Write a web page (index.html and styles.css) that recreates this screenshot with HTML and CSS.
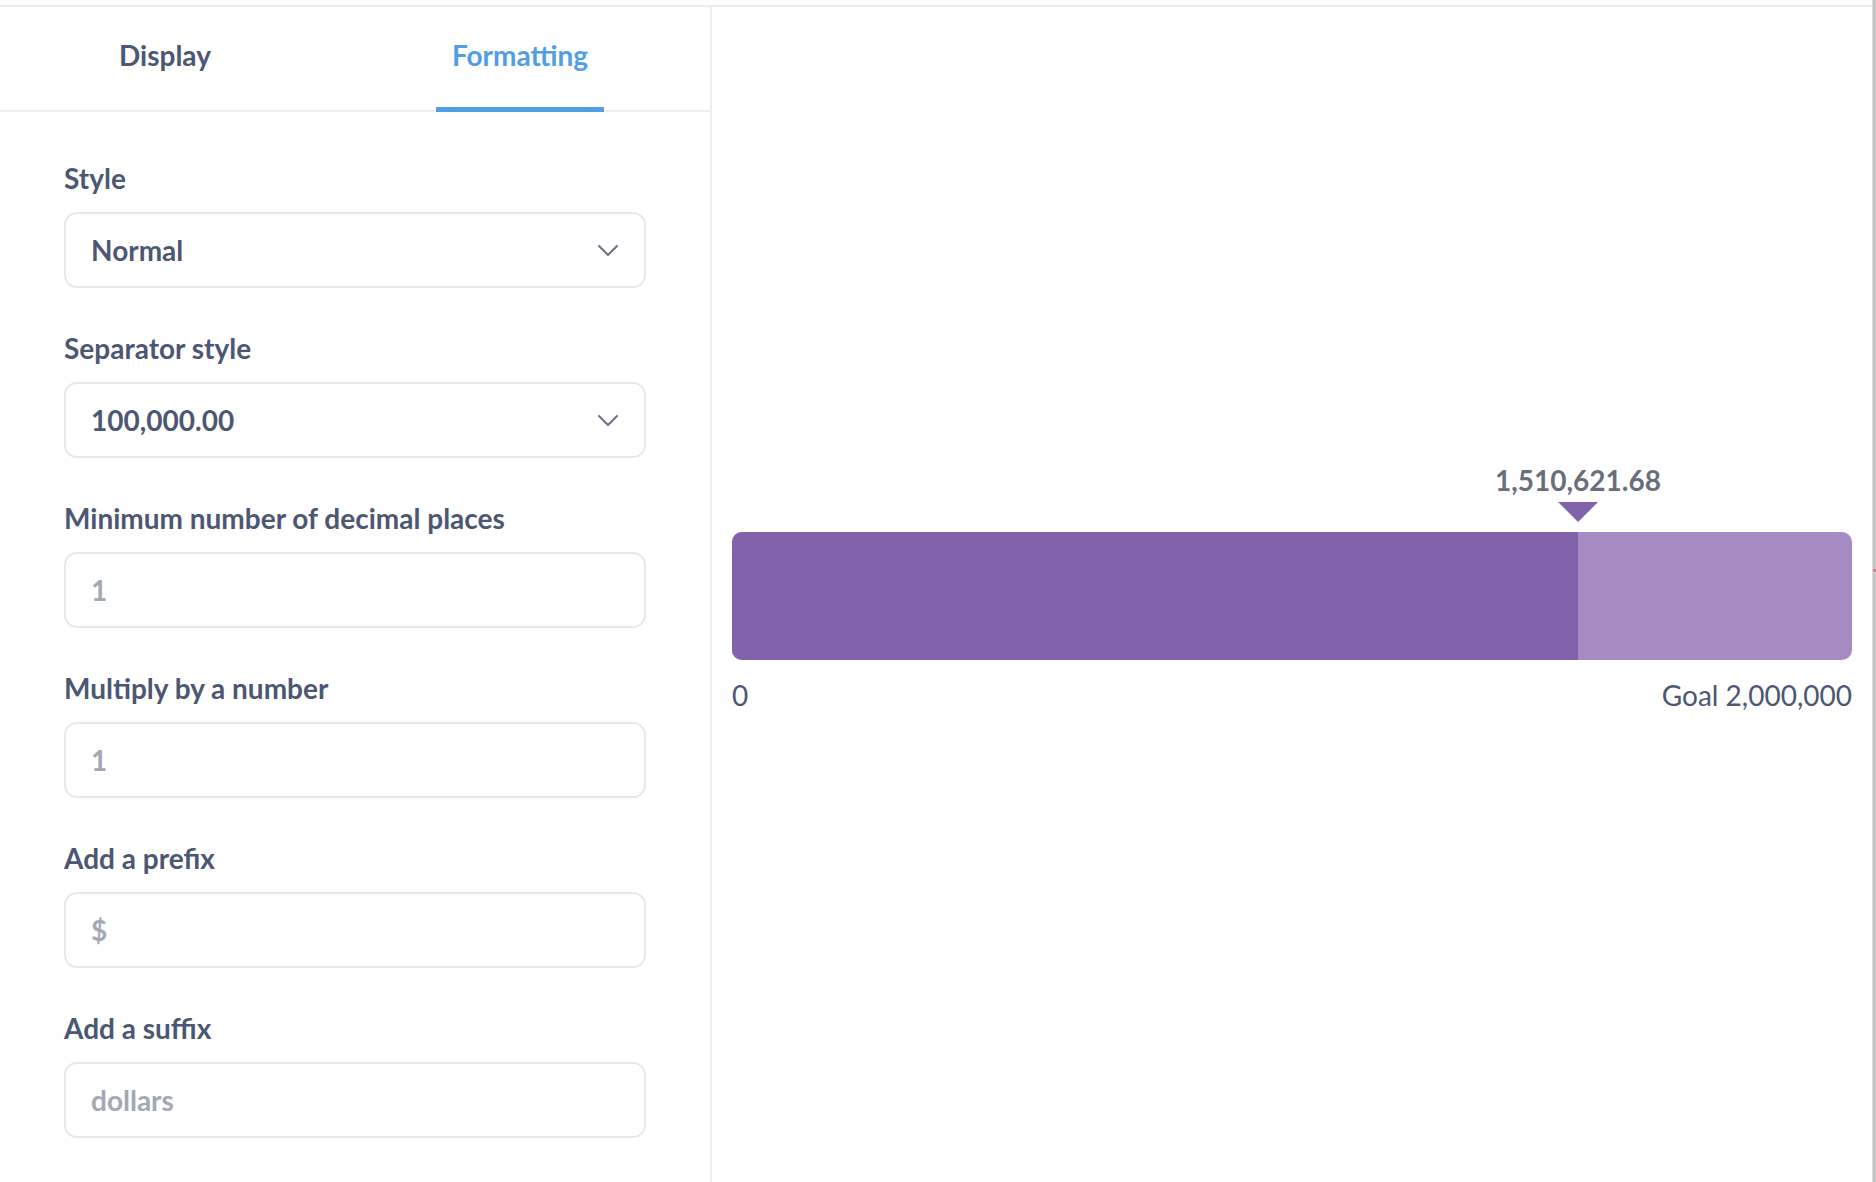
FILE: index.html
```html
<!DOCTYPE html>
<html lang="en">
<head>
<meta charset="utf-8">
<title>Formatting</title>
<link rel="stylesheet" href="styles.css">
</head>
<body>
<div class="app">
  <div class="main">
    <aside class="sidebar">
      <nav class="tabs">
        <div class="tab"><span class="tab-label">Display</span></div>
        <div class="tab tab-active"><span class="tab-label">Formatting</span></div>
      </nav>
      <form class="settings">
        <div class="field">
          <label class="field-label">Style</label>
          <div class="select"><span class="select-value">Normal</span>
            <svg class="chevron" viewBox="0 0 20 11" width="20" height="11"><path d="M1 1 L10 10 L19 1" fill="none" stroke="#6a7285" stroke-width="2" stroke-linecap="round" stroke-linejoin="round"/></svg>
          </div>
        </div>
        <div class="field">
          <label class="field-label">Separator style</label>
          <div class="select"><span class="select-value">100,000.00</span>
            <svg class="chevron" viewBox="0 0 20 11" width="20" height="11"><path d="M1 1 L10 10 L19 1" fill="none" stroke="#6a7285" stroke-width="2" stroke-linecap="round" stroke-linejoin="round"/></svg>
          </div>
        </div>
        <div class="field">
          <label class="field-label">Minimum number of decimal places</label>
          <input class="text-input" type="text" placeholder="1">
        </div>
        <div class="field">
          <label class="field-label">Multiply by a number</label>
          <input class="text-input" type="text" placeholder="1">
        </div>
        <div class="field">
          <label class="field-label">Add a prefix</label>
          <input class="text-input" type="text" placeholder="$">
        </div>
        <div class="field">
          <label class="field-label">Add a suffix</label>
          <input class="text-input" type="text" placeholder="dollars">
        </div>
      </form>
    </aside>
    <section class="viz">
      <div class="progress">
        <div class="marker-row">
          <div class="marker" style="left: 75.53%;">
            <span class="marker-value">1,510,621.68</span>
            <span class="marker-arrow"></span>
          </div>
        </div>
        <div class="bar">
          <div class="bar-fill" style="width: 75.53%;"></div>
        </div>
        <div class="axis">
          <span>0</span>
          <span>Goal 2,000,000</span>
        </div>
      </div>
    </section>
  </div>
  <div class="scroll-strip"><span class="scroll-tick"></span></div>
</div>
</body>
</html>
```

FILE: styles.css
```css
* { box-sizing: border-box; }

html, body {
  margin: 0;
  padding: 0;
  height: 100%;
  background: #ffffff;
}

body {
  font-family: Lato, "Open Sans", sans-serif;
  color: #4c5773;
}

.app {
  display: flex;
  height: 1182px;
  overflow: hidden;
}

.main {
  flex: 1;
  display: flex;
  margin-top: 5px;
  border-top: 2px solid #ececec;
}

.scroll-strip {
  position: relative;
  width: 4px;
  background: #c6c6c6;
  border-left: 1px solid #dadada;
}

.scroll-tick {
  position: absolute;
  left: 0;
  top: 569px;
  width: 4px;
  height: 3px;
  background: #c98a95;
}

/* Sidebar */
.sidebar {
  width: 712px;
  flex-shrink: 0;
  border-right: 2px solid #eeeeee;
  display: flex;
  flex-direction: column;
}

.tabs {
  display: grid;
  grid-template-columns: 330px 380px;
  height: 105px;
  border-bottom: 2px solid #eeeeee;
}

.tab {
  display: flex;
  justify-content: center;
  align-items: stretch;
}

.tab-label {
  display: flex;
  align-items: center;
  padding: 0 16px 4px;
  font-size: 28px;
  font-weight: 700;
  color: #4c5773;
  border-bottom: 5px solid transparent;
  margin-bottom: -2px;
}

.tab-active .tab-label {
  color: #509ee3;
  border-bottom-color: #509ee3;
}

.settings {
  padding: 50px 64px 0 64px;
  margin: 0;
}

.field {
  margin-bottom: 44px;
}

.field-label {
  display: block;
  font-size: 28px;
  line-height: 32px;
  font-weight: 700;
  color: #4c5773;
  margin-bottom: 18px;
}

.select,
.text-input {
  display: flex;
  align-items: center;
  width: 100%;
  height: 76px;
  border: 2px solid #e8e8ea;
  border-radius: 13px;
  padding: 0 26px 0 25px;
  background: #ffffff;
}

.select {
  justify-content: space-between;
}

.select-value {
  font-size: 28px;
  font-weight: 700;
  color: #4c5773;
}

.chevron {
  display: block;
}

.text-input {
  font-family: Lato, "Open Sans", sans-serif;
  font-size: 28px;
  font-weight: 700;
  color: #4c5773;
  outline: none;
}

.text-input::placeholder {
  color: #a3a8b5;
  opacity: 1;
}

/* Visualization */
.viz {
  flex: 1;
  display: flex;
  flex-direction: column;
  justify-content: center;
  padding: 0 20px 14px;
}

.progress {
  display: flex;
  flex-direction: column;
}

.marker-row {
  position: relative;
  height: 68px;
}

.marker {
  position: absolute;
  top: 0;
  transform: translateX(-50%);
  display: flex;
  flex-direction: column;
  align-items: center;
}

.marker-value {
  font-size: 28px;
  line-height: 32px;
  font-weight: 700;
  color: #696e7b;
}

.marker-arrow {
  margin-top: 6px;
  width: 0;
  height: 0;
  border-left: 20px solid transparent;
  border-right: 20px solid transparent;
  border-top: 20px solid #8262aa;
}

.bar {
  height: 128px;
  border-radius: 10px;
  background: #a68bc3;
  overflow: hidden;
  display: flex;
}

.bar-fill {
  height: 100%;
  background: #8262aa;
}

.axis {
  display: flex;
  justify-content: space-between;
  margin-top: 19px;
  font-size: 28px;
  line-height: 32px;
  font-weight: 400;
  color: #4c5773;
}
```
